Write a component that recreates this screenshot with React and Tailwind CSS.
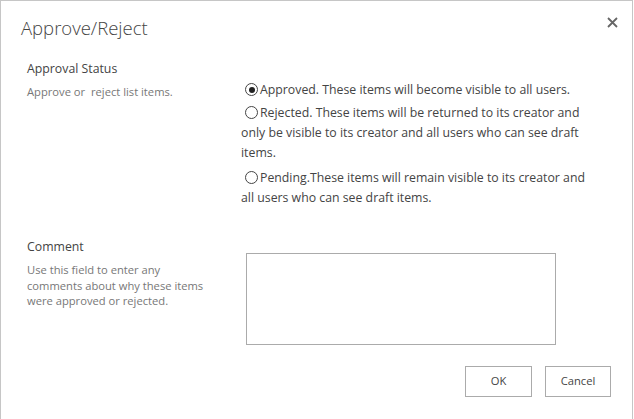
import React from 'react';

function Radio({ checked }) {
    return (
        <span className="inline-block indent-0 align-[-2px] w-[13px] h-[13px] rounded-full border border-[#444] bg-white mr-[2px] relative">
            {checked && <span className="absolute left-[2.5px] top-[2.5px] w-[6px] h-[6px] rounded-full bg-[#222]" />}
        </span>
    );
}

export default function App() {
    return (
        <div className="w-[634px] h-[419px] bg-white" style={{ fontFamily: '"Open Sans", "Noto Sans", sans-serif' }}>
            <div className="w-[633px] h-[419px] border-l border-t border-r border-[#c6c6c6] box-border flex flex-col">

                {/* Header */}
                <div className="flex justify-between items-start pl-[20px] pr-[14px] pt-[13px]">
                    <h1 className="m-0 text-[18.5px] font-light text-[#444] leading-[28px]">Approve/Reject</h1>
                    <button className="bg-transparent border-none p-0 mt-[3px] text-[#666]">
                        <svg width="11" height="11" viewBox="0 0 11 11">
                            <path d="M1 1 L10 10 M10 1 L1 10" stroke="#666" strokeWidth="1.8" />
                        </svg>
                    </button>
                </div>

                {/* Approval status */}
                <div className="flex mt-[18px]">
                    <div className="w-[218px] pl-[26px] shrink-0">
                        <div className="text-[12.3px] text-[#444] leading-[18px]">Approval Status</div>
                        <div className="text-[11.2px] text-[#777] leading-[16px] mt-[6px] whitespace-pre">Approve or  reject list items.</div>
                    </div>
                    <div className="w-[372px] pl-[22px] pt-[20px] text-[12.3px] text-[#444] leading-[20px]">
                        <div className="indent-[4px]"><Radio checked />Approved. These items will become visible to all users.</div>
                        <div className="indent-[4px] mt-[3px]"><Radio />Rejected. These items will be returned to its creator and only be visible to its creator and all users who can see draft items.</div>
                        <div className="indent-[4px] mt-[5px]"><Radio />Pending.These items will remain visible to its creator and all users who can see draft items.</div>
                    </div>
                </div>

                {/* Comment */}
                <div className="flex mt-[30px]">
                    <div className="w-[218px] pl-[26px] shrink-0">
                        <div className="text-[12.3px] text-[#444] leading-[18px]">Comment</div>
                        <div className="text-[11.2px] text-[#777] leading-[15.5px] mt-[6px] w-[182px]">Use this field to enter any comments about why these items were approved or rejected.</div>
                    </div>
                    <div className="pt-[15px] pl-[27px]">
                        <textarea className="w-[310px] h-[92px] border border-[#ababab] resize-none outline-none block" />
                    </div>
                </div>

                {/* Buttons */}
                <div className="flex justify-end gap-[13px] pr-[21px] mt-[21px]">
                    <button className="w-[67px] h-[31px] border border-[#ababab] bg-white text-[11.2px] text-[#444]">OK</button>
                    <button className="w-[66px] h-[31px] border border-[#ababab] bg-white text-[11.2px] text-[#444]">Cancel</button>
                </div>
            </div>
        </div>
    );
}
